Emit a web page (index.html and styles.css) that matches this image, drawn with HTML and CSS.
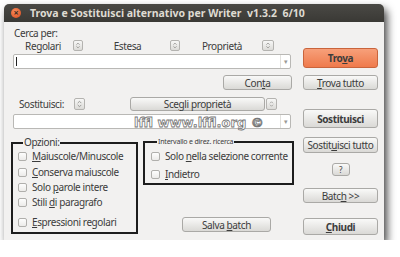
FILE: index.html
```html
<!DOCTYPE html>
<html lang="it">
<head>
    <meta charset="UTF-8">
    <title>Trova e Sostituisci alternativo per Writer</title>
    <link rel="stylesheet" href="styles.css">
</head>
<body>
    <div class="window">
        <div class="titlebar">
            <span class="close">×</span>
            <span class="title">Trova e Sostituisci alternativo per Writer  v1.3.2  6/10</span>
        </div>
        <div class="content">
            <div class="main">
                <div class="label cerca">Cerca per:</div>
                <div class="modes">
                    <div class="mode m1"><span class="mode-name">Regolari</span><span class="spin"><svg viewBox="0 0 10 11"><path d="M3 4.5 5 2.5 7 4.5M3 6.5 5 8.5 7 6.5"/></svg></span></div>
                    <div class="mode m2"><span class="mode-name">Estesa</span><span class="spin"><svg viewBox="0 0 10 11"><path d="M3 4.5 5 2.5 7 4.5M3 6.5 5 8.5 7 6.5"/></svg></span></div>
                    <div class="mode m3"><span class="mode-name">Proprietà</span><span class="spin wide"><svg viewBox="0 0 12 11"><path d="M4 4.5 6 2.5 8 4.5M4 6.5 6 8.5 8 6.5"/></svg></span></div>
                </div>
                <div class="combo"><span class="caret"></span><span class="drop">▾</span></div>
                <div class="row-end"><button class="btn conta"><span>Con<u>t</u>a</span></button></div>
                <div class="repl">
                    <span class="label repl-label">Sostituisci:</span>
                    <span class="spin"><svg viewBox="0 0 10 11"><path d="M3 4.5 5 2.5 7 4.5M3 6.5 5 8.5 7 6.5"/></svg></span>
                    <button class="btn scegli"><span>Sce<u>g</u>li proprietà</span></button>
                    <span class="spin wide"><svg viewBox="0 0 12 11"><path d="M4 4.5 6 2.5 8 4.5M4 6.5 6 8.5 8 6.5"/></svg></span>
                </div>
                <div class="combo"><span class="drop">▾</span></div>
                <div class="groups">
                    <fieldset class="frame opzioni">
                        <legend>Opzioni:</legend>
                        <label class="check c1"><span class="box"></span><span><u>M</u>aiuscole/Minuscole</span></label>
                        <label class="check c2"><span class="box"></span><span><u>C</u>onserva maiuscole</span></label>
                        <label class="check c3"><span class="box"></span><span>Solo <u>p</u>arole intere</span></label>
                        <label class="check c4"><span class="box"></span><span>Stili <u>d</u>i paragrafo</span></label>
                        <label class="check c5"><span class="box"></span><span><u>E</u>spressioni regolari</span></label>
                    </fieldset>
                    <div class="side">
                        <fieldset class="frame range">
                            <legend>Intervallo e direz. ricerca</legend>
                            <label class="check r1"><span class="box"></span><span>Solo <u>n</u>ella selezione corrente</span></label>
                            <label class="check r2"><span class="box"></span><span><u>I</u>ndietro</span></label>
                        </fieldset>
                        <button class="btn salva"><span>Salva <u>b</u>atch</span></button>
                    </div>
                </div>
            </div>
            <div class="actions">
                <button class="btn primary trova"><span>Tro<u>v</u>a</span></button>
                <button class="btn trova-tutto"><span><u>T</u>rova tutto</span></button>
                <button class="btn bold sost"><span>Sostituisci</span></button>
                <button class="btn sost-tutto"><span>Sostit<u>u</u>isci tutto</span></button>
                <button class="btn help"><span>?</span></button>
                <button class="btn batch"><span>Batc<u>h</u> &gt;&gt;</span></button>
                <button class="btn bold chiudi"><span><u>C</u>hiudi</span></button>
            </div>
        </div>
        <div class="watermark">lffl www.lffl.org ©</div>
    </div>
</body>
</html>
```

FILE: styles.css
```css
* {
    box-sizing: border-box;
    margin: 0;
    padding: 0;
}
body {
    background: #fff;
    font-family: 'Noto Sans', 'DejaVu Sans', sans-serif;
    font-size: 10px;
    letter-spacing: -0.4px;
    color: #3c3c3c;
    padding: 4px 0 0 4px;
}
.window {
    position: relative;
    width: 380px;
    height: 236px;
    background: #f2f1f0;
    border-radius: 5px 5px 0 0;
    box-shadow: 3px 5px 8px rgba(0, 0, 0, 0.75);
}
.titlebar {
    height: 18px;
    background: linear-gradient(#4a4945, #3a3935);
    border-radius: 5px 5px 0 0;
    display: flex;
    align-items: center;
    padding-left: 7px;
    letter-spacing: 0;
}
.close {
    width: 10px;
    height: 10px;
    border-radius: 50%;
    background: radial-gradient(circle at 40% 35%, #f78d5c, #d9481c);
    color: #3a2a20;
    font-size: 9px;
    line-height: 10px;
    text-align: center;
    font-weight: bold;
}
.title {
    margin-left: 9px;
    color: #dfdbd2;
    font-weight: bold;
    font-size: 10.5px;
    white-space: pre;
}
.content {
    display: flex;
    padding: 5px 6px 0 7px;
}
.main {
    width: 283px;
}
.actions {
    width: 75px;
    margin-left: 9px;
    display: flex;
    flex-direction: column;
}
.label {
    line-height: 12px;
}
.cerca {
    height: 12px;
    margin-left: 3px;
}
.modes {
    display: flex;
    height: 11px;
    margin-top: 1px;
    margin-left: 2px;
}
.mode {
    display: flex;
    align-items: center;
}
.mode-name {
    flex: 1;
    text-align: center;
}
.m1 { width: 72px; }
.m2 { width: 97px; }
.m3 { width: 94px; }
.spin {
    width: 10px;
    height: 11px;
    margin-right: 2px;
    border: 1px solid #b4b3b0;
    border-radius: 2px;
    background: linear-gradient(#f7f7f6, #dcdbd8);
    display: flex;
}
.spin.wide {
    width: 12px;
}
.spin svg {
    width: 100%;
    height: 100%;
    fill: none;
    stroke: #8a8986;
    stroke-width: 0.9;
}
.combo {
    height: 15px;
    margin-top: 3px;
    margin-left: 2px;
    width: 278px;
    background: #fff;
    border: 1px solid #b9b8b5;
    border-radius: 2px;
    display: flex;
    align-items: center;
}
.caret {
    width: 1px;
    height: 9px;
    margin-left: 2px;
    background: #222;
}
.drop {
    margin-left: auto;
    width: 10px;
    height: 13px;
    border-left: 1px solid #e2e1de;
    color: #9a9996;
    font-size: 7px;
    line-height: 13px;
    text-align: center;
}
.btn {
    font-family: inherit;
    font-size: 10px;
    letter-spacing: -0.4px;
    color: #3c3c3c;
    background: linear-gradient(#f9f9f8, #dad9d6);
    border: 1px solid #aaa9a6;
    border-radius: 3px;
    line-height: 1;
    display: flex;
    align-items: center;
    justify-content: center;
    white-space: nowrap;
}
u {
    text-decoration-thickness: 1px;
    text-underline-offset: 1px;
}
.row-end {
    display: flex;
    justify-content: flex-end;
    margin-top: 6px;
}
.conta {
    width: 69px;
    height: 15px;
    margin-right: 2px;
}
.repl {
    display: flex;
    align-items: center;
    height: 14px;
    margin-top: 7px;
}
.repl-label {
    margin-left: 8px;
    width: 55px;
}
.repl .spin {
    height: 12px;
    width: 11px;
}
.scegli {
    width: 135px;
    height: 14px;
    margin-left: 43px;
    margin-right: 1px;
}
.groups {
    display: flex;
    margin-top: 8px;
}
.frame {
    border: 2px solid #1d1d1d;
}
.frame legend {
    margin-left: 5px;
    padding: 0 1px 2px;
    line-height: 8px;
}
.opzioni {
    width: 127px;
    height: 96px;
    margin-top: 1px;
    padding-left: 5px;
}
.range {
    width: 151px;
    height: 47px;
    margin-top: 1px;
    padding-left: 6px;
}
.range legend {
    font-size: 7px;
    line-height: 8px;
    padding-bottom: 0;
    letter-spacing: -0.2px;
    margin-left: 6px;
}
.side {
    margin-left: 5px;
    display: flex;
    flex-direction: column;
}
.check {
    display: flex;
    align-items: center;
    height: 12px;
    white-space: nowrap;
}
.box {
    width: 9px;
    height: 9px;
    border: 1px solid #b0afac;
    border-radius: 2px;
    background: linear-gradient(#fdfdfd, #ecebe9);
    margin-right: 5px;
}
.c1 { margin-top: 2px; }
.c2 { margin-top: 4px; }
.c3 { margin-top: 3px; }
.c4 { margin-top: 3px; }
.c5 { margin-top: 8px; }
.r1 { margin-top: 4px; }
.r2 { margin-top: 6px; }
.salva {
    width: 89px;
    height: 15px;
    margin-top: 32px;
    margin-left: 39px;
}
.trova {
    height: 20px;
    margin-top: 21px;
}
.primary {
    background: linear-gradient(#f7a07a, #ef7a4c);
    border-color: #c9643c;
    font-weight: bold;
}
.trova-tutto {
    height: 15px;
    margin-top: 7px;
}
.bold {
    font-weight: bold;
}
.sost {
    height: 19px;
    margin-top: 19px;
}
.sost-tutto {
    height: 16px;
    margin-top: 9px;
}
.help {
    width: 18px;
    height: 13px;
    margin-top: 10px;
    align-self: center;
    font-size: 8px;
}
.batch {
    height: 15px;
    margin-top: 12px;
}
.chiudi {
    height: 17px;
    margin-top: 15px;
}
.watermark {
    position: absolute;
    left: 130px;
    top: 111px;
    font-family: 'DejaVu Sans', sans-serif;
    font-weight: bold;
    font-size: 13px;
    letter-spacing: 0;
    color: #fff;
    -webkit-text-stroke: 0.8px #777;
    white-space: nowrap;
}
```
